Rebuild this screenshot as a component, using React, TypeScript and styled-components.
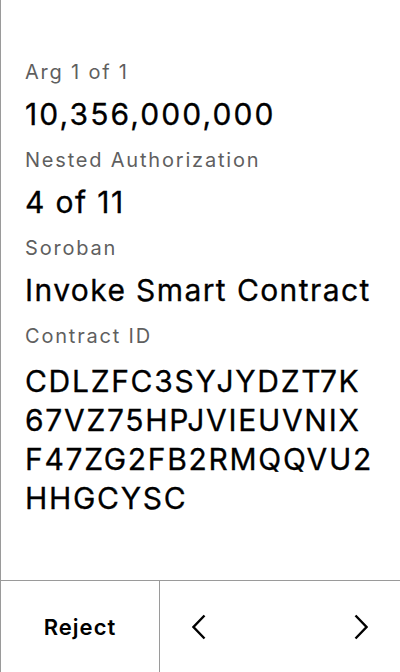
import React from "react";
import styled, { createGlobalStyle } from "styled-components";

const Global = createGlobalStyle`
  html, body { margin: 0; padding: 0; background: #fff; }
  body { font-family: Inter, "Noto Sans", sans-serif; -webkit-font-smoothing: antialiased; }
  * { box-sizing: border-box; }
`;

const Screen = styled.div`
  width: 400px;
  height: 672px;
  display: flex;
  flex-direction: column;
  border-left: 1px solid #9a9a9a;
  background: #fff;
`;

const Content = styled.div`
  flex: 1;
  display: flex;
  flex-direction: column;
  gap: 12px;
  padding: 58px 16px 0 24px;
`;

const Field = styled.div`
  display: flex;
  flex-direction: column;
`;

const Label = styled.div`
  font-size: 20px;
  line-height: 28px;
  letter-spacing: 1.8px;
  color: #5f5f5f;
  white-space: nowrap;
`;

const Value = styled.div<{ $wrap?: boolean }>`
  font-size: 30px;
  font-weight: 400;
  line-height: ${(p) => (p.$wrap ? "39px" : "40px")};
  letter-spacing: ${(p) => (p.$wrap ? "1.7px" : "1.4px")};
  color: #000;
  margin-top: ${(p) => (p.$wrap ? "12px" : "8px")};
  white-space: nowrap;
  -webkit-text-stroke: 0.3px #000;
`;

const Digits = styled.span`
  letter-spacing: 2.1px;
`;

const Footer = styled.div`
  height: 92px;
  display: grid;
  grid-template-columns: 159px 1fr;
  border-top: 1px solid #9a9a9a;
`;

const RejectButton = styled.div`
  display: flex;
  align-items: center;
  justify-content: center;
  font-size: 22px;
  font-weight: 600;
  letter-spacing: 1px;
  color: #000;
  border-right: 1px solid #9a9a9a;
`;

const Nav = styled.div`
  display: flex;
  align-items: center;
  justify-content: space-between;
  padding: 0 32px;
`;

const Chevron = ({ dir }: { dir: "left" | "right" }) => (
  <svg width="14" height="26" viewBox="0 0 14 26" fill="none">
    <path
      d={dir === "left" ? "M12.5 1.5 L1.5 13 L12.5 24.5" : "M1.5 1.5 L12.5 13 L1.5 24.5"}
      stroke="#000"
      strokeWidth="2.4"
      strokeLinecap="butt"
      strokeLinejoin="miter"
    />
  </svg>
);

export default function App() {
  return (
    <>
      <Global />
      <Screen>
        <Content>
          <Field>
            <Label>Arg 1 of 1</Label>
            <Value>
              <Digits>10,356,000,000</Digits>
            </Value>
          </Field>
          <Field>
            <Label>Nested Authorization</Label>
            <Value>4 of 11</Value>
          </Field>
          <Field>
            <Label>Soroban</Label>
            <Value>Invoke Smart Contract</Value>
          </Field>
          <Field>
            <Label>Contract ID</Label>
            <Value $wrap>
              CDLZFC3SYJYDZT7K
              <br />
              67VZ75HPJVIEUVNIX
              <br />
              F47ZG2FB2RMQQVU2
              <br />
              HHGCYSC
            </Value>
          </Field>
        </Content>
        <Footer>
          <RejectButton>Reject</RejectButton>
          <Nav>
            <Chevron dir="left" />
            <Chevron dir="right" />
          </Nav>
        </Footer>
      </Screen>
    </>
  );
}
